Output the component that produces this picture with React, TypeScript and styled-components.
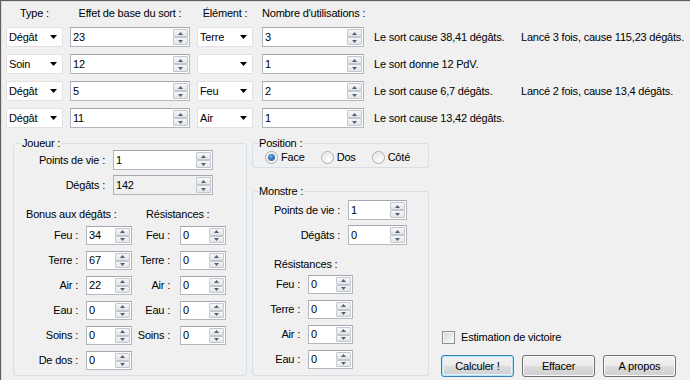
import React from 'react';
import styled, { createGlobalStyle } from 'styled-components';

const GlobalStyle = createGlobalStyle`
  html, body { margin: 0; padding: 0; background: #f0f0f0; }
  body {
    font-family: "Liberation Sans", Arial, sans-serif;
    font-size: 11px;
    letter-spacing: -0.2px;
    color: #000;
  }
  * { box-sizing: border-box; }
`;

const Window = styled.div`
  width: 690px;
  height: 380px;
  border-top: 1px solid #5e5e5e;
  border-left: 1px solid #5e5e5e;
  box-shadow: inset 1px 1px 0 #dcdcdc;
  background: #f0f0f0;
  display: flex;
  flex-direction: column;
  overflow: hidden;
`;

const SpellGrid = styled.div`
  display: grid;
  grid-template-columns: 64px 127px 65px 112px 147px 1fr;
  grid-template-rows: 19px repeat(4, 20px);
  row-gap: 7px;
  padding-left: 5px;
  align-items: center;
`;

const HeaderLabel = styled.div<{ $w: number }>`
  width: ${(p) => p.$w}px;
  text-align: center;
  line-height: 13px;
  align-self: end;
  white-space: nowrap;
`;

const ComboBox = styled.div<{ $w: number }>`
  width: ${(p) => p.$w}px;
  height: 20px;
  border: 1px solid #e2e2e2;
  background: #fff;
  display: flex;
  align-items: center;
  justify-content: space-between;
  padding: 0 5px 0 2px;
`;

const ComboText = styled.span`
  line-height: 13px;
`;

const NumBox = styled.div<{ $w: number; $h?: number; $readOnly?: boolean }>`
  width: ${(p) => p.$w}px;
  height: ${(p) => p.$h ?? 20}px;
  flex-shrink: 0;
  display: flex;
  align-items: stretch;
  border: 1px solid #b2b6bd;
  border-top-color: #a3a8b0;
  background: ${(p) => (p.$readOnly ? '#f0f0f0' : '#ffffff')};
`;

const NumValue = styled.span`
  flex: 1;
  display: flex;
  align-items: center;
  padding-left: 2px;
  line-height: 13px;
`;

const Spinner = styled.div`
  width: 16px;
  padding: 1px 1px 1px 0;
  display: flex;
  flex-direction: column;
`;

const SpinButton = styled.div`
  flex: 1;
  display: flex;
  align-items: center;
  justify-content: center;
  border: 1px solid #c3c8d0;
  border-radius: 1px;
  background: linear-gradient(#f7f7f7, #e4e4e4);
`;

const ResultText = styled.span`
  white-space: nowrap;
  line-height: 13px;
`;

const BottomArea = styled.div`
  margin-top: 9px;
  height: 240px;
  padding-left: 12px;
  display: flex;
  align-items: flex-start;
  gap: 5px;
`;

const GroupBox = styled.fieldset<{ $w: number; $h: number; $pl: number }>`
  width: ${(p) => p.$w}px;
  height: ${(p) => p.$h}px;
  flex-shrink: 0;
  margin: 0;
  padding: 0 0 0 ${(p) => p.$pl}px;
  border: 1px solid #d5dfe5;
  border-radius: 3px;
  min-width: 0;
`;

const GroupLegend = styled.legend`
  margin-left: 1px;
  padding: 0 1px;
  line-height: 13px;
  font-size: 11px;
`;

const FieldGrid = styled.div<{ $labelW: number; $mt: number }>`
  display: grid;
  grid-template-columns: ${(p) => p.$labelW}px auto;
  grid-auto-rows: 20px;
  column-gap: 8px;
  row-gap: 5px;
  margin-top: ${(p) => p.$mt}px;
  align-items: center;
`;

const FieldLabel = styled.span`
  text-align: right;
  line-height: 13px;
  white-space: nowrap;
`;

const SectionTitles = styled.div`
  display: grid;
  grid-template-columns: 120px auto;
  margin-top: 13px;
  padding-left: 6px;
  line-height: 13px;
`;

const SectionTitle = styled.div<{ $pl?: number; $mt?: number }>`
  line-height: 13px;
  padding-left: ${(p) => p.$pl ?? 0}px;
  margin-top: ${(p) => p.$mt ?? 0}px;
`;

const StatGrid = styled.div<{ $cols: string; $mt: number }>`
  display: grid;
  grid-template-columns: ${(p) => p.$cols};
  grid-auto-rows: 19px;
  row-gap: 6px;
  margin-top: ${(p) => p.$mt}px;
  align-items: center;
`;

const StatLabel = styled.span<{ $pr: number }>`
  text-align: right;
  padding-right: ${(p) => p.$pr}px;
  line-height: 13px;
  white-space: nowrap;
`;

const MiddleColumn = styled.div`
  flex-shrink: 0;
  display: flex;
  flex-direction: column;
  gap: 17px;
`;

const RadioRow = styled.div`
  display: flex;
  align-items: center;
  gap: 16px;
  margin-top: 1px;
  padding-left: 8px;
  height: 13px;
`;

const RadioItem = styled.label`
  display: flex;
  align-items: center;
  gap: 3px;
  line-height: 13px;
`;

const RadioCircle = styled.span<{ $checked?: boolean }>`
  width: 13px;
  height: 13px;
  border-radius: 50%;
  border: 1px solid #a9abad;
  background: radial-gradient(circle at 65% 70%, #ffffff 0%, #ececec 55%, #d6d6d6 100%);
  box-shadow: inset 0 0 0 1px #f8f8f8;
  display: flex;
  align-items: center;
  justify-content: center;
  &::after {
    content: '';
    width: 5px;
    height: 5px;
    border-radius: 50%;
    background: ${(p) =>
      p.$checked ? 'radial-gradient(circle at 40% 35%, #7cc6f2 0%, #2468ad 55%, #163f73 100%)' : 'transparent'};
    box-shadow: ${(p) => (p.$checked ? '0 0 0 1px #3a74b0' : 'none')};
  }
`;

const ActionsColumn = styled.div`
  flex: 1;
  min-width: 0;
  align-self: stretch;
  display: flex;
  flex-direction: column;
  justify-content: flex-end;
  gap: 11px;
  padding: 0 0 0 7px;
`;

const CheckRow = styled.label`
  display: flex;
  align-items: center;
  gap: 6px;
  margin-left: 1px;
  line-height: 13px;
`;

const CheckSquare = styled.span`
  width: 13px;
  height: 13px;
  border: 1px solid #8e8f8f;
  background: linear-gradient(135deg, #d2d4d8 0%, #eceef0 60%, #fafafa 100%);
  box-shadow: inset 0 0 0 1px #f4f4f4;
`;

const ButtonRow = styled.div`
  display: flex;
  gap: 8px;
`;

const Button = styled.button<{ $default?: boolean }>`
  width: 73px;
  height: 22px;
  flex-shrink: 0;
  padding: 0;
  font-family: "Liberation Sans", Arial, sans-serif;
  font-size: 11px;
  letter-spacing: -0.2px;
  color: #000;
  border-radius: 3px;
  border: 1px solid ${(p) => (p.$default ? '#3c7fb1' : '#707070')};
  background: linear-gradient(#f2f2f2 0%, #ebebeb 49%, #dddddd 50%, #cfcfcf 100%);
  box-shadow: ${(p) =>
    p.$default ? 'inset 0 0 0 1px #b5e3f7, inset 0 0 0 2px #e2f4fc' : 'inset 0 0 0 1px #fbfbfb'};
`;

const SpinArrow = ({ up }: { up?: boolean }) => (
  <svg width="5" height="3" viewBox="0 0 5 3">
    <path d={up ? 'M0 3L2.5 0L5 3Z' : 'M0 0L5 0L2.5 3Z'} fill="#4f607c" />
  </svg>
);

const DropArrow = () => (
  <svg width="7" height="4" viewBox="0 0 7 4">
    <path d="M0 0H7L3.5 4Z" fill="#000" />
  </svg>
);

const NumericUpDown = ({ value, w, h, readOnly }: { value: string; w: number; h?: number; readOnly?: boolean }) => (
  <NumBox $w={w} $h={h} $readOnly={readOnly}>
    <NumValue>{value}</NumValue>
    <Spinner>
      <SpinButton>
        <SpinArrow up />
      </SpinButton>
      <SpinButton>
        <SpinArrow />
      </SpinButton>
    </Spinner>
  </NumBox>
);

const Combo = ({ value, w }: { value: string; w: number }) => (
  <ComboBox $w={w}>
    <ComboText>{value}</ComboText>
    <DropArrow />
  </ComboBox>
);

const spells = [
  { type: 'Dégât', base: '23', element: 'Terre', count: '3', result: 'Le sort cause 38,41 dégâts.', total: 'Lancé 3 fois, cause 115,23 dégâts.' },
  { type: 'Soin', base: '12', element: '', count: '1', result: 'Le sort donne 12 PdV.', total: '' },
  { type: 'Dégât', base: '5', element: 'Feu', count: '2', result: 'Le sort cause 6,7 dégâts.', total: 'Lancé 2 fois, cause 13,4 dégâts.' },
  { type: 'Dégât', base: '11', element: 'Air', count: '1', result: 'Le sort cause 13,42 dégâts.', total: '' },
];

const playerStats = [
  { label: 'Feu :', bonus: '34', res: '0' },
  { label: 'Terre :', bonus: '67', res: '0' },
  { label: 'Air :', bonus: '22', res: '0' },
  { label: 'Eau :', bonus: '0', res: '0' },
  { label: 'Soins :', bonus: '0', res: '0' },
  { label: 'De dos :', bonus: '0', res: null },
];

const monsterRes = [
  { label: 'Feu :', value: '0' },
  { label: 'Terre :', value: '0' },
  { label: 'Air :', value: '0' },
  { label: 'Eau :', value: '0' },
];

export default function App() {
  return (
    <>
      <GlobalStyle />
      <Window>
        <SpellGrid>
          <HeaderLabel $w={57}>Type :</HeaderLabel>
          <HeaderLabel $w={120}>Effet de base du sort :</HeaderLabel>
          <HeaderLabel $w={56}>Élément :</HeaderLabel>
          <HeaderLabel $w={102}>Nombre d'utilisations :</HeaderLabel>
          <span />
          <span />
          {spells.map((s, i) => (
            <React.Fragment key={i}>
              <Combo value={s.type} w={57} />
              <NumericUpDown value={s.base} w={120} />
              <Combo value={s.element} w={56} />
              <NumericUpDown value={s.count} w={102} />
              <ResultText>{s.result}</ResultText>
              <ResultText>{s.total}</ResultText>
            </React.Fragment>
          ))}
        </SpellGrid>

        <BottomArea>
          <GroupBox $w={234} $h={239} $pl={6}>
            <GroupLegend>Joueur :</GroupLegend>
            <FieldGrid $labelW={85} $mt={0}>
              <FieldLabel>Points de vie :</FieldLabel>
              <NumericUpDown value="1" w={100} />
              <FieldLabel>Dégâts :</FieldLabel>
              <NumericUpDown value="142" w={100} readOnly />
            </FieldGrid>
            <SectionTitles>
              <span>Bonus aux dégâts :</span>
              <span>Résistances :</span>
            </SectionTitles>
            <StatGrid $cols="66px 46px 48px 46px" $mt={5}>
              {playerStats.map((r) => (
                <React.Fragment key={r.label}>
                  <StatLabel $pr={8}>{r.label}</StatLabel>
                  <NumericUpDown value={r.bonus} w={46} h={19} />
                  {r.res !== null ? (
                    <>
                      <StatLabel $pr={10}>{r.label}</StatLabel>
                      <NumericUpDown value={r.res} w={46} h={19} />
                    </>
                  ) : (
                    <>
                      <span />
                      <span />
                    </>
                  )}
                </React.Fragment>
              ))}
            </StatGrid>
          </GroupBox>

          <MiddleColumn>
            <GroupBox $w={177} $h={31} $pl={4}>
              <GroupLegend>Position :</GroupLegend>
              <RadioRow>
                <RadioItem>
                  <RadioCircle $checked />
                  Face
                </RadioItem>
                <RadioItem>
                  <RadioCircle />
                  Dos
                </RadioItem>
                <RadioItem>
                  <RadioCircle />
                  Côté
                </RadioItem>
              </RadioRow>
            </GroupBox>

            <GroupBox $w={177} $h={191} $pl={4}>
              <GroupLegend>Monstre :</GroupLegend>
              <FieldGrid $labelW={83} $mt={2}>
                <FieldLabel>Points de vie :</FieldLabel>
                <NumericUpDown value="1" w={59} />
                <FieldLabel>Dégâts :</FieldLabel>
                <NumericUpDown value="0" w={59} />
              </FieldGrid>
              <SectionTitle $pl={17} $mt={13}>Résistances :</SectionTitle>
              <StatGrid $cols="51px 45px" $mt={4}>
                {monsterRes.map((r) => (
                  <React.Fragment key={r.label}>
                    <StatLabel $pr={8}>{r.label}</StatLabel>
                    <NumericUpDown value={r.value} w={45} h={19} />
                  </React.Fragment>
                ))}
              </StatGrid>
            </GroupBox>
          </MiddleColumn>

          <ActionsColumn>
            <CheckRow>
              <CheckSquare />
              Estimation de victoire
            </CheckRow>
            <ButtonRow>
              <Button $default>Calculer !</Button>
              <Button>Effacer</Button>
              <Button>A propos</Button>
            </ButtonRow>
          </ActionsColumn>
        </BottomArea>
      </Window>
    </>
  );
}
